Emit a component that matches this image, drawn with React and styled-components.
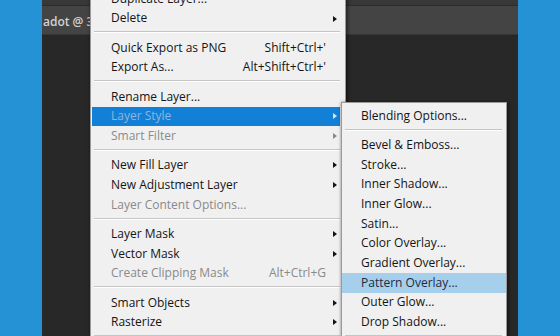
import React from "react";
import styled, { createGlobalStyle } from "styled-components";

const GlobalStyle = createGlobalStyle`
  html, body { margin: 0; padding: 0; background: #282828; overflow: hidden; }
  * { box-sizing: border-box; }
`;

const Page = styled.div`
  position: relative;
  display: flex;
  width: 560px;
  height: 336px;
  overflow: hidden;
  font-family: "Open Sans", "Noto Sans", sans-serif;
`;

const SideBar = styled.div`
  width: 42px;
  flex: none;
  background: #2692d6;
`;

const Workspace = styled.div`
  flex: 1;
  display: flex;
  flex-direction: column;
  background: #282828;
  min-width: 0;
`;

const TopStrip = styled.div`
  height: 6px;
  background: #383838;
  border-bottom: 1px solid #2c2c2c;
`;

const TabBar = styled.div`
  height: 29px;
  display: flex;
  align-items: center;
  background: #444444;
  border-bottom: 1px solid #363636;
  overflow: hidden;
  white-space: nowrap;
`;

const TabTitle = styled.span`
  padding: 2px 0 0 1px;
  font-size: 12px;
  font-weight: 600;
  color: #d2d2d2;
`;

const Canvas = styled.div`
  flex: 1;
`;

const Menu = styled.div`
  position: absolute;
  left: ${(p) => p.$left}px;
  top: ${(p) => p.$top}px;
  width: ${(p) => p.$width}px;
  padding: 3px ${(p) => p.$padRight}px 3px ${(p) => p.$padLeft}px;
  background: #f0f0f0;
  border: 1px solid #9a9a9a;
  box-shadow: 1px 1px 3px 1px rgba(0, 0, 0, 0.45);
  font-size: 12px;
`;

const Row = styled.div`
  display: grid;
  grid-template-columns: 1fr auto 14px;
  align-items: center;
  height: 19.7px;
  padding-left: ${(p) => p.$indent}px;
  background: ${(p) => p.$bg || "transparent"};
  color: ${(p) => p.$color};
  white-space: nowrap;
  overflow: hidden;
`;

const Label = styled.span`
  line-height: 1.2;
`;

const Shortcut = styled.span`
  line-height: 1.2;
  text-align: right;
`;

const Arrow = styled.span`
  justify-self: start;
  margin-left: 7px;
  width: 0;
  height: 0;
  border-top: 3.5px solid transparent;
  border-bottom: 3.5px solid transparent;
  border-left: 4px solid ${(p) => p.$color};
`;

const Separator = styled.div`
  height: 9.6px;
  display: flex;
  align-items: flex-start;
  padding: 3px ${(p) => p.$inset}px 0 ${(p) => p.$insetLeft}px;
  &::after {
    content: "";
    flex: 1;
    height: 1px;
    background: #c4c4c4;
    border-bottom: 1px solid #ffffff;
    box-sizing: content-box;
  }
`;

const mainItems = [
  { label: "Duplicate Layer..." },
  { label: "Delete", arrow: true },
  "sep",
  { label: "Quick Export as PNG", shortcut: "Shift+Ctrl+'" },
  { label: "Export As...", shortcut: "Alt+Shift+Ctrl+'" },
  "sep",
  { label: "Rename Layer..." },
  { label: "Layer Style", arrow: true, state: "active" },
  { label: "Smart Filter", arrow: true, state: "disabled" },
  "sep",
  { label: "New Fill Layer", arrow: true },
  { label: "New Adjustment Layer", arrow: true },
  { label: "Layer Content Options...", state: "disabled" },
  "sep",
  { label: "Layer Mask", arrow: true },
  { label: "Vector Mask", arrow: true },
  { label: "Create Clipping Mask", shortcut: "Alt+Ctrl+G", state: "disabled" },
  "sep",
  { label: "Smart Objects", arrow: true },
  { label: "Rasterize", arrow: true },
  "sep",
  { label: "New Layer Based Slice" },
];

const subItems = [
  { label: "Blending Options..." },
  "sep",
  { label: "Bevel & Emboss..." },
  { label: "Stroke..." },
  { label: "Inner Shadow..." },
  { label: "Inner Glow..." },
  { label: "Satin..." },
  { label: "Color Overlay..." },
  { label: "Gradient Overlay..." },
  { label: "Pattern Overlay...", state: "hover" },
  { label: "Outer Glow..." },
  { label: "Drop Shadow..." },
  "sep",
  { label: "Copy Layer Style" },
];

const palette = {
  normal: { color: "#141414", arrow: "#141414", bg: null },
  disabled: { color: "#8a8a8a", arrow: "#8a8a8a", bg: null },
  active: { color: "#90b5dc", arrow: "#d6e6f6", bg: "#1280d6" },
  hover: { color: "#1d2a42", arrow: "#1d2a42", bg: "#a6cfec" },
};

function MenuList({ items, indent, sepLeft, sepRight }) {
  return items.map((it, i) => {
    if (it === "sep") {
      return <Separator key={i} $insetLeft={sepLeft} $inset={sepRight} />;
    }
    const c = palette[it.state || "normal"];
    return (
      <Row key={i} $indent={indent} $color={c.color} $bg={c.bg}>
        <Label>{it.label}</Label>
        <Shortcut>{it.shortcut || ""}</Shortcut>
        {it.arrow ? <Arrow $color={c.arrow} /> : <span />}
      </Row>
    );
  });
}

export default function App() {
  return (
    <>
      <GlobalStyle />
      <Page>
        <SideBar />
        <Workspace>
          <TopStrip />
          <TabBar>
            <TabTitle>adot @ 33.3% (Layer 1, RGB/8)</TabTitle>
          </TabBar>
          <Canvas />
        </Workspace>
        <SideBar />

        <Menu $left={90} $top={-15} $width={256} $padLeft={1} $padRight={5}>
          <MenuList items={mainItems} indent={19} sepLeft={2} sepRight={0} />
        </Menu>

        <Menu $left={341} $top={102} $width={166} $padLeft={0} $padRight={0}>
          <MenuList items={subItems} indent={19} sepLeft={3} sepRight={4} />
        </Menu>
      </Page>
    </>
  );
}
